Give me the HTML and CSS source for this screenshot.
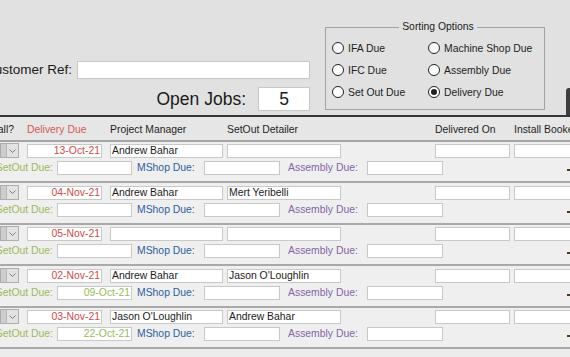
FILE: index.html
```html
<!DOCTYPE html>
<html>
<head>
<meta charset="utf-8">
<link rel="stylesheet" href="styles.css">
</head>
<body>
<div class="top">
  <div class="fields">
    <div class="ref-row">
      <div class="ref-label">Customer Ref:</div>
      <div class="box ref-input"></div>
    </div>
    <div class="jobs-row">
      <span class="jobs-label">Open Jobs:</span>
      <div class="box jobs-input">5</div>
    </div>
  </div>
  <fieldset class="sort">
    <legend>Sorting Options</legend>
    <div class="radios">
      <div class="radio"><span class="dot"></span>IFA Due</div>
      <div class="radio"><span class="dot"></span>Machine Shop Due</div>
      <div class="radio"><span class="dot"></span>IFC Due</div>
      <div class="radio"><span class="dot"></span>Assembly Due</div>
      <div class="radio"><span class="dot"></span>Set Out Due</div>
      <div class="radio"><span class="dot on"></span>Delivery Due</div>
    </div>
  </fieldset>
  <div class="edge-btn"></div>
</div>

<div class="head">
  <div class="hcell end">Install?</div>
  <div class="hcell red-h">Delivery Due</div>
  <div class="hcell">Project Manager</div>
  <div class="hcell">SetOut Detailer</div>
  <div class="hcell">Delivered On</div>
  <div class="hcell">Install Booked</div>
</div>

<div class="rows">
  <div class="row">
    <div class="l1">
      <div class="combo"><span class="combo-l"></span><span class="combo-btn"><svg width="7" height="4" viewBox="0 0 7 4"><path d="M0.5 0.5 L3.5 3.5 L6.5 0.5" fill="none" stroke="#7a7a7a" stroke-width="1"/></svg></span></div>
      <div class="box in w75 date red">13-Oct-21</div>
      <div class="box in w113">Andrew Bahar</div>
      <div class="box in w114"></div>
      <div class="box in w75"></div>
      <div class="box in w80"></div>
    </div>
    <div class="l2">
      <div class="lab green">SetOut Due:</div>
      <div class="box in w75 date green"></div>
      <div class="lab-m blue">MShop Due:</div>
      <div class="box in w76"></div>
      <div class="lab-a purple">Assembly Due:</div>
      <div class="box in w76"></div>
      <span class="mark"></span>
    </div>
  </div>

  <div class="row">
    <div class="l1">
      <div class="combo"><span class="combo-l"></span><span class="combo-btn"><svg width="7" height="4" viewBox="0 0 7 4"><path d="M0.5 0.5 L3.5 3.5 L6.5 0.5" fill="none" stroke="#7a7a7a" stroke-width="1"/></svg></span></div>
      <div class="box in w75 date red">04-Nov-21</div>
      <div class="box in w113">Andrew Bahar</div>
      <div class="box in w114">Mert Yeribelli</div>
      <div class="box in w75"></div>
      <div class="box in w80"></div>
    </div>
    <div class="l2">
      <div class="lab green">SetOut Due:</div>
      <div class="box in w75 date green"></div>
      <div class="lab-m blue">MShop Due:</div>
      <div class="box in w76"></div>
      <div class="lab-a purple">Assembly Due:</div>
      <div class="box in w76"></div>
      <span class="mark"></span>
    </div>
  </div>

  <div class="row">
    <div class="l1">
      <div class="combo"><span class="combo-l"></span><span class="combo-btn"><svg width="7" height="4" viewBox="0 0 7 4"><path d="M0.5 0.5 L3.5 3.5 L6.5 0.5" fill="none" stroke="#7a7a7a" stroke-width="1"/></svg></span></div>
      <div class="box in w75 date red">05-Nov-21</div>
      <div class="box in w113"></div>
      <div class="box in w114"></div>
      <div class="box in w75"></div>
      <div class="box in w80"></div>
    </div>
    <div class="l2">
      <div class="lab green">SetOut Due:</div>
      <div class="box in w75 date green"></div>
      <div class="lab-m blue">MShop Due:</div>
      <div class="box in w76"></div>
      <div class="lab-a purple">Assembly Due:</div>
      <div class="box in w76"></div>
      <span class="mark"></span>
    </div>
  </div>

  <div class="row">
    <div class="l1">
      <div class="combo"><span class="combo-l"></span><span class="combo-btn"><svg width="7" height="4" viewBox="0 0 7 4"><path d="M0.5 0.5 L3.5 3.5 L6.5 0.5" fill="none" stroke="#7a7a7a" stroke-width="1"/></svg></span></div>
      <div class="box in w75 date red">02-Nov-21</div>
      <div class="box in w113">Andrew Bahar</div>
      <div class="box in w114">Jason O'Loughlin</div>
      <div class="box in w75"></div>
      <div class="box in w80"></div>
    </div>
    <div class="l2">
      <div class="lab green">SetOut Due:</div>
      <div class="box in w75 date green">09-Oct-21</div>
      <div class="lab-m blue">MShop Due:</div>
      <div class="box in w76"></div>
      <div class="lab-a purple">Assembly Due:</div>
      <div class="box in w76"></div>
      <span class="mark"></span>
    </div>
  </div>

  <div class="row">
    <div class="l1">
      <div class="combo"><span class="combo-l"></span><span class="combo-btn"><svg width="7" height="4" viewBox="0 0 7 4"><path d="M0.5 0.5 L3.5 3.5 L6.5 0.5" fill="none" stroke="#7a7a7a" stroke-width="1"/></svg></span></div>
      <div class="box in w75 date red">03-Nov-21</div>
      <div class="box in w113">Jason O'Loughlin</div>
      <div class="box in w114">Andrew Bahar</div>
      <div class="box in w75"></div>
      <div class="box in w80"></div>
    </div>
    <div class="l2">
      <div class="lab green">SetOut Due:</div>
      <div class="box in w75 date green">22-Oct-21</div>
      <div class="lab-m blue">MShop Due:</div>
      <div class="box in w76"></div>
      <div class="lab-a purple">Assembly Due:</div>
      <div class="box in w76"></div>
      <span class="mark"></span>
    </div>
  </div>
</div>
</body>
</html>
```

FILE: styles.css
```css
html, body {
  margin: 0;
  padding: 0;
}

body {
  width: 570px;
  height: 357px;
  overflow: hidden;
  background: #ececec;
  font-family: "Liberation Sans", Arial, sans-serif;
  font-size: 10.4px;
  color: #1b1b1b;
}

.box {
  background: #ffffff;
  border: 1px solid #c8c8c8;
  box-sizing: border-box;
  white-space: nowrap;
  overflow: hidden;
}

/* ---------- top section ---------- */
.top {
  display: flex;
  height: 115px;
  background: #e1e1e1;
  border-bottom: 2px solid #353535;
}

.fields {
  width: 310px;
  flex: none;
  padding-top: 61px;
  box-sizing: border-box;
  display: flex;
  flex-direction: column;
}

.ref-row {
  display: flex;
  height: 18px;
}

.ref-label {
  width: 77px;
  flex: none;
  display: flex;
  justify-content: flex-end;
  padding-right: 5px;
  box-sizing: border-box;
  font-size: 13.5px;
  line-height: 18px;
  white-space: nowrap;
}

.ref-input {
  width: 233px;
  height: 18px;
}

.jobs-row {
  display: flex;
  justify-content: flex-end;
  align-items: center;
  margin-top: 8px;
  height: 24px;
}

.jobs-label {
  font-size: 17.5px;
  margin-right: 12px;
  white-space: nowrap;
}

.jobs-input {
  width: 52px;
  height: 24px;
  font-size: 17.5px;
  line-height: 22px;
  text-align: center;
}

.sort {
  flex: none;
  margin: 21px 0 0 15px;
  width: 220px;
  height: 89px;
  border: 1px solid #a2a2a2;
  padding: 0 0 0 6px;
  box-sizing: border-box;
  min-width: 0;
}

.sort legend {
  margin: 0 auto;
  padding: 0 3px;
  font-size: 10.4px;
  line-height: 12px;
  color: #222;
}

.radios {
  display: grid;
  grid-template-columns: 96px auto;
  grid-auto-rows: 22px;
  margin-top: 4px;
}

.radio {
  display: flex;
  align-items: center;
  gap: 4px;
  font-size: 10.4px;
  color: #1e1e1e;
  white-space: nowrap;
}

.dot {
  width: 12px;
  height: 12px;
  border-radius: 50%;
  border: 1px solid #222;
  background: #fff;
  box-sizing: border-box;
  flex: none;
  display: flex;
  align-items: center;
  justify-content: center;
}

.dot.on::after {
  content: "";
  width: 6px;
  height: 6px;
  border-radius: 50%;
  background: #222;
}

.edge-btn {
  flex: none;
  margin: 88px 0 0 21px;
  width: 8px;
  height: 27px;
  background: #3d3d3d;
  border-radius: 3px 0 0 0;
}

/* ---------- header ---------- */
.head {
  display: grid;
  grid-template-columns: 27px 83px 117px 208px 79px 80px;
  height: 22.5px;
  box-sizing: content-box;
  padding-top: 0;
  background: #e6e6e6;
  border-bottom: 2px solid #a4a4a4;
}

.hcell {
  padding-top: 7px;
  line-height: 12px;
  white-space: nowrap;
  color: #1f1f1f;
}

.hcell.end {
  display: flex;
  justify-content: flex-end;
  padding-right: 13px;
}

.red-h {
  color: #d25a57;
}

/* ---------- rows ---------- */
.row {
  height: 41.6px;
  box-sizing: border-box;
  border-bottom: 2px solid #a9a9a9;
  padding-top: 2.5px;
  background: #efefef;
}

.l1 {
  display: grid;
  grid-template-columns: 27px 83px 117px 208px 79px 80px;
  height: 14px;
}

.l2 {
  display: flex;
  align-items: center;
  height: 14px;
  margin-top: 3px;
}

.in {
  height: 14px;
  line-height: 12px;
  padding: 0 1px;
}

.date {
  text-align: right;
}

.w75 { width: 75px; }
.w76 { width: 76px; flex: none; }
.w80 { width: 80px; }
.w113 { width: 113px; }
.w114 { width: 114px; }

.l2 .w75 { flex: none; }

.combo {
  width: 19px;
  height: 15px;
  margin-top: -1px;
  box-sizing: border-box;
  border: 1px solid #adadad;
  background: #e2e2e2;
  display: flex;
}

.combo-l {
  width: 5px;
  background: #cdcdcd;
  border-right: 1px solid #b8b8b8;
}

.combo-btn {
  flex: 1;
  display: flex;
  align-items: center;
  justify-content: center;
}

.lab {
  width: 57px;
  flex: none;
  display: flex;
  justify-content: flex-end;
  padding-right: 4px;
  box-sizing: border-box;
  white-space: nowrap;
  line-height: 14px;
}

.lab-m {
  width: 72px;
  flex: none;
  padding-left: 5px;
  box-sizing: border-box;
  white-space: nowrap;
  line-height: 14px;
}

.lab-a {
  width: 87px;
  flex: none;
  padding-left: 8px;
  box-sizing: border-box;
  white-space: nowrap;
  line-height: 14px;
}

.mark {
  flex: none;
  width: 3px;
  height: 2px;
  margin-left: 124px;
  margin-top: 4px;
  background: #4a3a22;
}

.red { color: #cf4a48; }
.green { color: #9bb95a; }
.blue { color: #2f5d9e; }
.purple { color: #8465a8; }
```
